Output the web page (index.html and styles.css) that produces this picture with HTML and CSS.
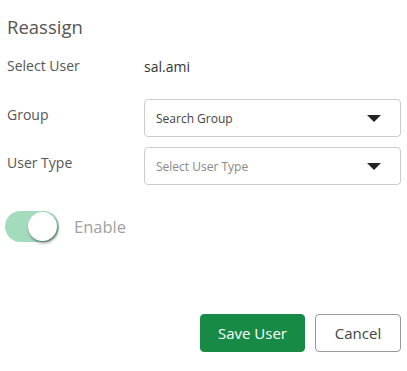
FILE: index.html
```html
<!DOCTYPE html>
<html lang="en">
<head>
  <meta charset="UTF-8" />
  <title>Reassign</title>
  <link rel="stylesheet" href="styles.css">
</head>
<body>
  <div class="panel">
    <h2 class="title">Reassign</h2>

    <div class="row row-static">
      <label class="label">Select User</label>
      <span class="value">sal.ami</span>
    </div>

    <div class="row">
      <label class="label">Group</label>
      <div class="select">
        <span class="select-text">Search Group</span>
        <span class="caret"></span>
      </div>
    </div>

    <div class="row">
      <label class="label">User Type</label>
      <div class="select">
        <span class="select-text muted">Select User Type</span>
        <span class="caret"></span>
      </div>
    </div>

    <div class="toggle-row">
      <div class="switch"><div class="knob"></div></div>
      <span class="toggle-label">Enable</span>
    </div>

    <div class="actions">
      <button class="btn btn-save">Save User</button>
      <button class="btn btn-cancel">Cancel</button>
    </div>
  </div>
</body>
</html>
```

FILE: styles.css
```css
* {
  margin: 0; padding: 0;
  box-sizing: border-box;
  font-family: 'Open Sans', 'Noto Sans', sans-serif;
}

body {
  background: #fff;
  width: 407px;
  height: 371px;
}

.panel {
  padding: 13px 6px 0 7px;
  display: flex;
  flex-direction: column;
}

.title {
  font-size: 18.5px;
  font-weight: 400;
  color: #555;
  line-height: 28px;
  margin-bottom: 15px;
}

.row {
  display: flex;
  align-items: flex-start;
  height: 38px;
  margin-bottom: 10px;
}

.row .label {
  padding-top: 6px;
}

.row-static {
  height: 20px;
  margin-bottom: 23px;
  align-items: center;
}

.row-static .label {
  padding-top: 0;
}

.label {
  width: 137px;
  font-size: 14px;
  line-height: 20px;
  color: #555;
}

.value {
  font-size: 14px;
  color: #333;
}

.select {
  flex: 1;
  height: 38px;
  border: 1px solid #ccc;
  border-radius: 4px;
  display: flex;
  align-items: center;
  justify-content: space-between;
  padding: 0 19px 0 11px;
}

.select-text {
  font-size: 12px;
  color: #444;
}

.select-text.muted {
  color: #888;
}

.caret {
  width: 0;
  height: 0;
  border-left: 7px solid transparent;
  border-right: 7px solid transparent;
  border-top: 7px solid #222;
}

.toggle-row {
  display: flex;
  align-items: center;
  margin-top: 16px;
  margin-left: -2px;
}

.switch {
  width: 54px;
  height: 31px;
  border-radius: 16px;
  background: #a3dcbd;
  position: relative;
}

.knob {
  position: absolute;
  top: 1px;
  right: 2px;
  width: 29px;
  height: 29px;
  border-radius: 50%;
  background: #fff;
  box-shadow: 1px 2px 3px rgba(0,0,0,0.45);
}

.toggle-label {
  margin-left: 15px;
  font-size: 16.5px;
  color: #a0a0a0;
}

.actions {
  display: flex;
  justify-content: flex-end;
  gap: 10px;
  margin-top: 72px;
}

.btn {
  height: 38px;
  border-radius: 4px;
  font-size: 15px;
  cursor: pointer;
}

.btn-save {
  width: 105px;
  background: #178a45;
  border: 1px solid #178a45;
  color: #fff;
}

.btn-cancel {
  width: 86px;
  background: #fff;
  border: 1px solid #999;
  color: #444;
}
```
